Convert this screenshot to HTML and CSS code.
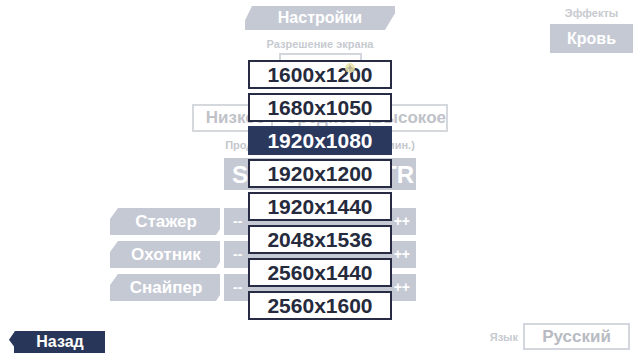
FILE: index.html
```html
<!DOCTYPE html>
<html lang="ru">
<head>
<meta charset="utf-8">
<title>Настройки</title>
<link rel="stylesheet" href="styles.css">
</head>
<body>
<div class="screen">
  <div class="top">
    <div class="top-center">
      <div class="banner">Настройки</div>
      <div class="small-label res-label">Разрешение экрана</div>
      <div class="select-box"></div>
    </div>
    <div class="top-right">
      <div class="small-label">Эффекты</div>
      <div class="gray-btn blood">Кровь</div>
    </div>
  </div>

  <div class="quality">
    <span class="q-item q-low">Низкое</span>
    <span class="q-item q-mid">Среднее</span>
    <span class="q-item q-high">Высокое</span>
  </div>

  <div class="small-label dur-label">Продолжительность раунда (мин.)</div>

  <div class="group">
    <div class="big-block"><span>S</span><span>TR</span></div>
    <div class="rows">
      <div class="row"><div class="tag">Стажер</div><div class="value"><span>--</span><span>++</span></div></div>
      <div class="row"><div class="tag">Охотник</div><div class="value"><span>--</span><span>++</span></div></div>
      <div class="row"><div class="tag">Снайпер</div><div class="value"><span>--</span><span>++</span></div></div>
    </div>
  </div>

  <div class="bottom">
    <div class="back">Назад</div>
    <div class="lang">
      <span class="small-label">Язык</span>
      <div class="lang-box">Русский</div>
    </div>
  </div>

  <ul class="dropdown">
    <li class="opt">1600x1200</li>
    <li class="opt">1680x1050</li>
    <li class="opt selected">1920x1080</li>
    <li class="opt">1920x1200</li>
    <li class="opt">1920x1440</li>
    <li class="opt">2048x1536</li>
    <li class="opt">2560x1440</li>
    <li class="opt">2560x1600</li>
  </ul>

  <svg class="cursor" width="12" height="12" viewBox="0 0 12 12">
    <circle cx="6" cy="6" r="5" fill="#e9e3a6" opacity="0.85"/>
    <path d="M6 2 L7 5 L10 6 L7 7 L6 10 L5 7 L2 6 L5 5 Z" fill="#b8b49a"/>
  </svg>
</div>
</body>
</html>
```

FILE: styles.css
```css
* { box-sizing: border-box; }
html, body { margin: 0; padding: 0; background: #ffffff; }
body { font-family: "Liberation Sans", Arial, sans-serif; font-weight: bold; }

.screen {
  position: relative;
  width: 640px;
  height: 360px;
  overflow: hidden;
  display: flex;
  flex-direction: column;
  background: #ffffff;
}

.small-label {
  font-size: 11px;
  line-height: 14px;
  color: #c7cad0;
  white-space: nowrap;
}

/* top band */
.top {
  display: grid;
  grid-template-columns: 1fr 150px 1fr;
}
.top-center {
  grid-column: 2;
  display: flex;
  flex-direction: column;
  align-items: center;
}
.banner {
  margin-top: 6px;
  width: 150px;
  height: 24px;
  background: #c5c9d4;
  color: #ffffff;
  font-size: 16px;
  line-height: 24px;
  text-align: center;
  clip-path: polygon(7px 0, 100% 0, 100% 30%, calc(100% - 10px) 100%, 0 100%, 0 60%);
}
.res-label { margin-top: 7px; }
.select-box {
  margin-top: 2px;
  width: 83px;
  height: 28px;
  border: 2px solid #d3d6dc;
}
.top-right {
  grid-column: 3;
  justify-self: end;
  margin-right: 7px;
  display: flex;
  flex-direction: column;
  align-items: center;
  padding-top: 6px;
}
.gray-btn {
  background: #c5c9d4;
  color: #ffffff;
  text-align: center;
}
.blood {
  margin-top: 4px;
  width: 83px;
  height: 29px;
  font-size: 16px;
  line-height: 29px;
}

/* quality */
.quality {
  align-self: center;
  margin-top: 23px;
  width: 256px;
  height: 28px;
  border: 2px solid #d5d8dd;
  display: flex;
  align-items: stretch;
  color: #bfc2c8;
  font-size: 17px;
  line-height: 24px;
}
.q-item { text-align: center; }
.q-low { width: 78px; padding-left: 6px; }
.q-mid { width: 102px; border-left: 2px solid #d5d8dd; border-right: 2px solid #d5d8dd; }
.q-high { flex: 1; }

.dur-label {
  align-self: center;
  margin-top: 6px;
  color: #c4c7cd;
}

/* center group */
.group {
  margin-left: 110px;
  display: flex;
  flex-direction: column;
}
.big-block {
  margin-top: 6px;
  margin-left: 114px;
  width: 192px;
  height: 32px;
  background: #c5c9d4;
  color: #ffffff;
  font-size: 24px;
  line-height: 34px;
  display: flex;
  justify-content: space-between;
  padding: 0 2px 0 8px;
}
.rows {
  margin-top: 18px;
  display: flex;
  flex-direction: column;
  gap: 6px;
}
.row {
  display: flex;
  gap: 4px;
  height: 27px;
}
.tag {
  width: 110px;
  background: #c5c9d4;
  color: #ffffff;
  font-size: 17px;
  line-height: 27px;
  text-align: center;
  padding-left: 2px;
  clip-path: polygon(8px 0, 100% 0, 100% calc(100% - 6px), calc(100% - 4px) 100%, 0 100%, 0 11px);
}
.value {
  width: 192px;
  background: #c5c9d4;
  color: #ffffff;
  font-size: 14px;
  line-height: 27px;
  display: flex;
  justify-content: space-between;
  padding: 0 6px 0 9px;
}

/* bottom */
.bottom {
  margin-top: auto;
  display: flex;
  justify-content: space-between;
  align-items: flex-end;
  padding: 0 10px 7px 9px;
}
.back {
  width: 96px;
  height: 22px;
  background: #283759;
  color: #ffffff;
  font-size: 16px;
  line-height: 22px;
  text-align: center;
  padding-left: 6px;
  clip-path: polygon(6px 0, 100% 0, 100% 100%, 5px 100%, 5px 70%, 0 40%);
}
.lang {
  display: flex;
  align-items: center;
  gap: 5px;
  margin-bottom: 3px;
}
.lang-box {
  width: 107px;
  height: 27px;
  border: 2px solid #d3d6dc;
  color: #b8bbc2;
  font-size: 17px;
  line-height: 23px;
  text-align: center;
}

/* dropdown overlay */
.dropdown {
  position: absolute;
  left: 248px;
  top: 60px;
  margin: 0;
  padding: 0;
  list-style: none;
  display: flex;
  flex-direction: column;
  gap: 4px;
}
.opt {
  width: 144px;
  height: 29px;
  border: 2px solid #272c44;
  background: #ffffff;
  color: #252a3c;
  font-size: 21px;
  line-height: 25px;
  text-align: center;
}
.opt.selected {
  background: #2a385d;
  border-color: #2a385d;
  color: #ffffff;
}
.cursor {
  position: absolute;
  left: 344px;
  top: 62px;
}
```
